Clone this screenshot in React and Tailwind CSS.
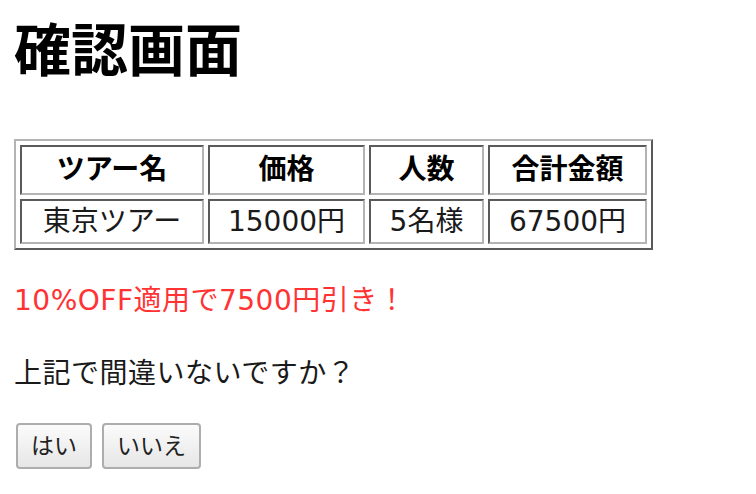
import React from "react";

const rows = [["東京ツアー", "15000円", "5名様", "67500円"]];
const heads = ["ツアー名", "価格", "人数", "合計金額"];
const widths = ["w-[184px]", "w-[157px]", "w-[115px]", "w-[159px]"];

function App() {
  return (
    <div className="min-h-screen bg-white px-[14px] pt-[23px] text-[#1a1a1a] font-['DejaVu_Sans','Noto_Sans_CJK_JP',sans-serif]">
      <h1 className="text-[57px] leading-[56px] font-bold text-black">確認画面</h1>

      <table className="mt-[60px] border-separate border-spacing-[4px] border-2 border-t-[#b4b4b4] border-l-[#b4b4b4] border-r-[#5a5a5a] border-b-[#5a5a5a]">
        <thead>
          <tr>
            {heads.map((h, i) => (
              <th
                key={h}
                className={`${widths[i]} h-[50px] p-0 text-center text-[28px] leading-[30px] font-bold text-black border-2 border-t-[#5a5a5a] border-l-[#5a5a5a] border-r-[#b4b4b4] border-b-[#b4b4b4]`}
              >
                {h}
              </th>
            ))}
          </tr>
        </thead>
        <tbody>
          {rows.map((r) => (
            <tr key={r[0]}>
              {r.map((c, i) => (
                <td
                  key={i}
                  className={`${widths[i]} h-[45px] p-0 text-center text-[28px] leading-[30px] border-2 border-t-[#5a5a5a] border-l-[#5a5a5a] border-r-[#b4b4b4] border-b-[#b4b4b4]`}
                >
                  {c}
                </td>
              ))}
            </tr>
          ))}
        </tbody>
      </table>

      <p className="mt-[37px] text-[28px] leading-[28px] tracking-[0.5px] text-[#ff3333]">10%OFF適用で7500円引き！</p>

      <p className="mt-[45px] text-[28px] leading-[28px] tracking-[0.5px]">上記で間違いないですか？</p>

      <div className="mt-[35px] flex gap-[10px] pl-[2px]">
        <button className="h-[46px] px-[13px] rounded-[4px] border-2 border-[#adadad] bg-gradient-to-b from-[#fbfbfb] to-[#e6e6e6] text-[23px] leading-none text-[#222]">
          はい
        </button>
        <button className="h-[46px] px-[13px] rounded-[4px] border-2 border-[#adadad] bg-gradient-to-b from-[#fbfbfb] to-[#e6e6e6] text-[23px] leading-none text-[#222]">
          いいえ
        </button>
      </div>
    </div>
  );
}

export default App;
